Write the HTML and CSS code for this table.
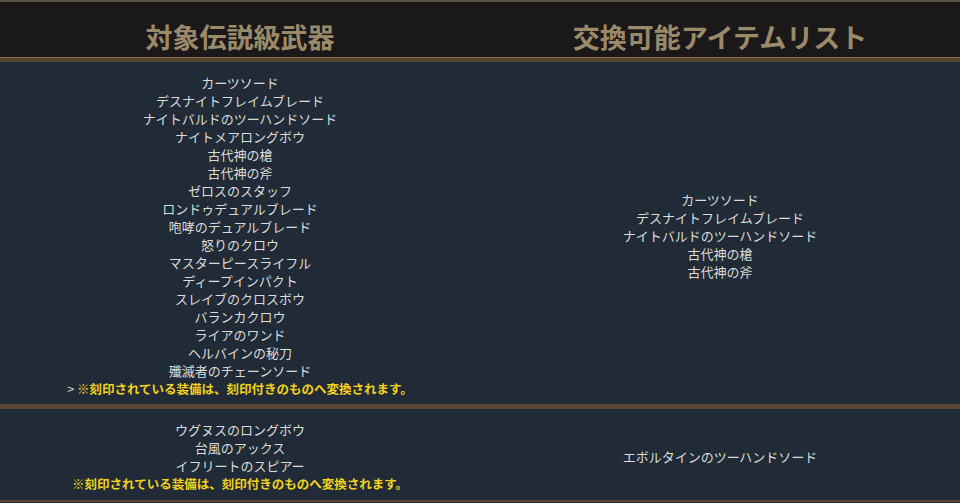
FILE: index.html
```html
<!DOCTYPE html>
<html lang="ja">
<head>
<meta charset="utf-8">
<link rel="stylesheet" href="styles.css">
</head>
<body>
<div class="table">
  <div class="head">
    <div class="th">対象伝説級武器</div>
    <div class="th">交換可能アイテムリスト</div>
  </div>
  <div class="row row1">
    <div class="td">
      <div>カーツソード</div>
      <div>デスナイトフレイムブレード</div>
      <div>ナイトバルドのツーハンドソード</div>
      <div>ナイトメアロングボウ</div>
      <div>古代神の槍</div>
      <div>古代神の斧</div>
      <div>ゼロスのスタッフ</div>
      <div>ロンドゥデュアルブレード</div>
      <div>咆哮のデュアルブレード</div>
      <div>怒りのクロウ</div>
      <div>マスターピースライフル</div>
      <div>ディープインパクト</div>
      <div>スレイブのクロスボウ</div>
      <div>バランカクロウ</div>
      <div>ライアのワンド</div>
      <div>ヘルバインの秘刀</div>
      <div>殲滅者のチェーンソード</div>
      <div class="note"><span class="gt">&gt; </span>※刻印されている装備は、刻印付きのものへ変換されます。</div>
    </div>
    <div class="td">
      <div>カーツソード</div>
      <div>デスナイトフレイムブレード</div>
      <div>ナイトバルドのツーハンドソード</div>
      <div>古代神の槍</div>
      <div>古代神の斧</div>
    </div>
  </div>
  <div class="row row2">
    <div class="td">
      <div>ウグヌスのロングボウ</div>
      <div>台風のアックス</div>
      <div>イフリートのスピアー</div>
      <div class="note">※刻印されている装備は、刻印付きのものへ変換されます。</div>
    </div>
    <div class="td">
      <div>エボルタインのツーハンドソード</div>
    </div>
  </div>
</div>
</body>
</html>
```
FILE: styles.css
```css
html, body {
  margin: 0;
  padding: 0;
  background: #202b37;
}
body {
  font-family: "Noto Sans CJK JP", "Noto Sans", sans-serif;
  color: #dcdcdc;
}
.table {
  width: 960px;
}
.head {
  display: grid;
  grid-template-columns: 1fr 1fr;
  background: #1a1818;
  border-top: 2px solid #5a4f46;
  border-bottom: 1px solid #8a7352;
  height: 58px;
  box-sizing: border-box;
}
.th {
  text-align: center;
  font-size: 27px;
  font-weight: bold;
  color: #9b8a6a;
  line-height: 27px;
  padding-top: 21px;
}
.row {
  display: grid;
  grid-template-columns: 1fr 1fr;
  border-top: 4px solid #564533;
}
.row2 {
  border-top: 5px solid #5a4632;
  border-bottom: 2px solid #5a4632;
}
.td {
  display: flex;
  flex-direction: column;
  justify-content: center;
  align-items: center;
  text-align: center;
  font-size: 13px;
  line-height: 18px;
  padding: 12px 0 6px;
}
.row2 .td {
  padding: 12px 0 7px;
}
.note {
  color: #f2d21c;
  font-weight: bold;
  font-size: 12.5px;
}
.gt {
  color: #dcdcdc;
  font-weight: normal;
}
```
